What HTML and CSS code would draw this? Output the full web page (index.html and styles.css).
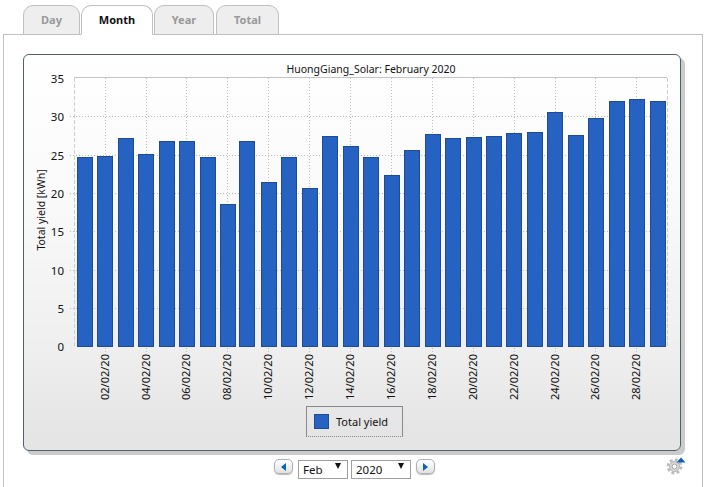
FILE: index.html
```html
<!DOCTYPE html>
<html lang="en">
<head>
  <meta charset="UTF-8">
  <meta name="viewport" content="width=device-width, initial-scale=1.0">
  <title>HuongGiang_Solar - Month</title>
  <link rel="stylesheet" href="styles.css">
</head>
<body>
  <ul class="tabs">
    <li class="tab tab-day">Day</li>
    <li class="tab tab-month active">Month</li>
    <li class="tab tab-year">Year</li>
    <li class="tab tab-total">Total</li>
  </ul>

  <div class="content">
    <div class="panel">
      <svg class="chart" viewBox="24 55 656 351" width="656" height="351">
        <text class="title" x="371" y="73" text-anchor="middle">HuongGiang_Solar: February 2020</text>

        <g class="grid">
          <path d="M70 116.5H667M70 155.5H667M70 193.5H667M70 231.5H667M70 270.5H667M70 308.5H667"/>
          <path d="M105.5 78V352M146.5 78V352M186.5 78V352M227.5 78V352M268.5 78V352M309.5 78V352M350.5 78V352M391.5 78V352M432.5 78V352M473.5 78V352M514.5 78V352M555.5 78V352M595.5 78V352M636.5 78V352"/>
        </g>
        <path class="frame-top" d="M74 77.5H667"/>
        <path class="frame-side" d="M74.5 78V347M667.5 78V347"/>

        <g class="bars">
          <rect x="77.5" y="157.5" width="15" height="189"/>
          <rect x="97.5" y="156.5" width="15" height="190"/>
          <rect x="118.5" y="138.5" width="15" height="208"/>
          <rect x="138.5" y="154.5" width="15" height="192"/>
          <rect x="159.5" y="141.5" width="15" height="205"/>
          <rect x="179.5" y="141.5" width="15" height="205"/>
          <rect x="200.5" y="157.5" width="15" height="189"/>
          <rect x="220.5" y="204.5" width="15" height="142"/>
          <rect x="239.5" y="141.5" width="15" height="205"/>
          <rect x="261.5" y="182.5" width="15" height="164"/>
          <rect x="281.5" y="157.5" width="15" height="189"/>
          <rect x="302.5" y="188.5" width="15" height="158"/>
          <rect x="322.5" y="136.5" width="15" height="210"/>
          <rect x="343.5" y="146.5" width="15" height="200"/>
          <rect x="363.5" y="157.5" width="15" height="189"/>
          <rect x="384.5" y="175.5" width="15" height="171"/>
          <rect x="404.5" y="150.5" width="15" height="196"/>
          <rect x="425.5" y="134.5" width="15" height="212"/>
          <rect x="445.5" y="138.5" width="15" height="208"/>
          <rect x="466.5" y="137.5" width="15" height="209"/>
          <rect x="486.5" y="136.5" width="15" height="210"/>
          <rect x="506.5" y="133.5" width="15" height="213"/>
          <rect x="527.5" y="132.5" width="15" height="214"/>
          <rect x="547.5" y="112.5" width="15" height="234"/>
          <rect x="568.5" y="135.5" width="15" height="211"/>
          <rect x="588.5" y="118.5" width="15" height="228"/>
          <rect x="609.5" y="101.5" width="15" height="245"/>
          <rect x="629.5" y="99.5" width="15" height="247"/>
          <rect x="650.5" y="101.5" width="15" height="245"/>
        </g>

        <g class="axis-y">
          <text x="64" y="83">35</text>
          <text x="64" y="121">30</text>
          <text x="64" y="160">25</text>
          <text x="64" y="198">20</text>
          <text x="64" y="236">15</text>
          <text x="64" y="275">10</text>
          <text x="64" y="313">5</text>
          <text x="64" y="351">0</text>
        </g>
        <text class="axis-name" transform="translate(45 210) rotate(-90)" text-anchor="middle">Total yield [kWh]</text>

        <g class="axis-x">
          <text transform="translate(109 400) rotate(-90)">02/02/20</text>
          <text transform="translate(150 400) rotate(-90)">04/02/20</text>
          <text transform="translate(190 400) rotate(-90)">06/02/20</text>
          <text transform="translate(231 400) rotate(-90)">08/02/20</text>
          <text transform="translate(272 400) rotate(-90)">10/02/20</text>
          <text transform="translate(313 400) rotate(-90)">12/02/20</text>
          <text transform="translate(354 400) rotate(-90)">14/02/20</text>
          <text transform="translate(395 400) rotate(-90)">16/02/20</text>
          <text transform="translate(436 400) rotate(-90)">18/02/20</text>
          <text transform="translate(477 400) rotate(-90)">20/02/20</text>
          <text transform="translate(518 400) rotate(-90)">22/02/20</text>
          <text transform="translate(559 400) rotate(-90)">24/02/20</text>
          <text transform="translate(599 400) rotate(-90)">26/02/20</text>
          <text transform="translate(640 400) rotate(-90)">28/02/20</text>
        </g>
      </svg>

      <div class="legend">
        <span class="swatch"></span>
        <span>Total yield</span>
      </div>
    </div>

    <div class="nav">
      <button class="nav-btn" type="button" aria-label="Previous"><span class="arrow-left"></span></button>
      <div class="pick pick-month">
        <select><option>Feb</option></select>
      </div>
      <div class="pick pick-year">
        <select><option>2020</option></select>
      </div>
      <button class="nav-btn" type="button" aria-label="Next"><span class="arrow-right"></span></button>

      <svg class="gear" viewBox="0 0 20 18" width="20" height="18">
        <circle cx="8.5" cy="9.5" r="6.6" fill="none" stroke="#bcbcbc" stroke-width="2.6" stroke-dasharray="3 2.2"/>
        <circle cx="8.5" cy="9.5" r="5" fill="#d8d8d8" stroke="#b4b4b4"/>
        <circle cx="8.5" cy="9.5" r="2.4" fill="#fff" stroke="#a8a8a8"/>
        <path d="M10.5 5.5L15 0.5L19.5 5.5Z" fill="#0b63b5"/>
      </svg>
    </div>
  </div>
</body>
</html>
```

FILE: styles.css
```css
* {
  box-sizing: border-box;
}
body {
  margin: 0;
  font-family: "Noto Sans", "Open Sans", sans-serif;
  background: #fff;
  color: #111;
}
.tabs {
  display: flex;
  gap: 1px;
  list-style: none;
  margin: 0;
  padding: 5px 0 0 23px;
  height: 34px;
}
.tab {
  position: relative;
  height: 30px;
  border: 1px solid #c0c0c0;
  border-radius: 10px 10px 0 0;
  background: #eee;
  color: #999;
  font-size: 11px;
  font-weight: bold;
  line-height: 28px;
  text-align: center;
}
.tab-day { width: 57px; }
.tab-month { width: 72px; }
.tab-year { width: 60px; }
.tab-total { width: 63px; margin-left: 1px; }
.tab.active {
  background: #fff;
  color: #111;
  border-bottom-color: #fff;
}
.content {
  height: calc(100vh - 34px);
  width: 700px;
  margin: 0 0 0 3px;
  padding: 19px 0 0 19px;
  border: 1px solid #c0c0c0;
  border-bottom: none;
}
.panel {
  width: 658px;
  height: 397px;
  border: 1px solid #4f5f6b;
  border-radius: 6px;
  background: linear-gradient(#fff, #fafafa 35%, #efefef 74%, #e5e5e5 95%);
  box-shadow: 4px 4px 0 #cbcbcb;
}
.chart {
  display: block;
}
.chart text {
  font-family: "Noto Sans", "Open Sans", sans-serif;
  fill: #111;
}
.title {
  font-size: 10.5px;
}
.grid path {
  fill: none;
  stroke: #bdbdbd;
  stroke-dasharray: 1 2;
}
.frame-top {
  stroke: #c4c4c4;
}
.frame-side {
  stroke: #cfcfcf;
  stroke-dasharray: 4 2;
}
.bars rect {
  fill: #2562c2;
  stroke: #1f4a94;
}
.axis-y text {
  font-size: 11.5px;
  text-anchor: end;
}
.axis-name {
  font-size: 10.5px;
}
.axis-x text {
  font-size: 11px;
}
.legend {
  display: flex;
  align-items: center;
  gap: 7px;
  width: 97px;
  height: 31px;
  margin-left: 282px;
  padding-left: 7px;
  border: 1px solid #88888e;
  border-bottom-style: dotted;
  font-size: 11px;
}
.swatch {
  width: 15px;
  height: 15px;
  background: #2562c2;
  border: 1px solid #1f4a94;
}
.nav {
  position: relative;
  display: flex;
  align-items: center;
  width: 658px;
  height: 19px;
  margin-top: 6px;
  padding-left: 251px;
}
.nav-btn {
  display: flex;
  align-items: center;
  justify-content: center;
  width: 19px;
  height: 15px;
  padding: 0;
  border: 1px solid #b0b0b0;
  border-radius: 5px;
  background: linear-gradient(#fff, #e2e2e2);
  box-shadow: 0 1px 1px #bbb;
}
.arrow-left,
.arrow-right {
  width: 0;
  height: 0;
  border-top: 4px solid transparent;
  border-bottom: 4px solid transparent;
}
.arrow-left {
  border-right: 5px solid #0b63b5;
}
.arrow-right {
  border-left: 5px solid #0b63b5;
}
.pick {
  position: relative;
  height: 19px;
}
.pick-month {
  width: 50px;
  margin-left: 5px;
}
.pick-year {
  width: 60px;
  margin: 0 5px 0 3px;
}
.pick select {
  appearance: none;
  width: 100%;
  height: 100%;
  padding: 0 0 0 4px;
  border: 1px solid #a0a0a0;
  border-radius: 0;
  background: #fff;
  color: #111;
  font-family: inherit;
  font-size: 11.5px;
}
.pick::after {
  content: "";
  position: absolute;
  top: 6px;
  right: 7px;
  border-left: 3.5px solid transparent;
  border-right: 3.5px solid transparent;
  border-top: 6px solid #111;
}
.gear {
  position: absolute;
  top: 0;
  right: -5px;
}
```
